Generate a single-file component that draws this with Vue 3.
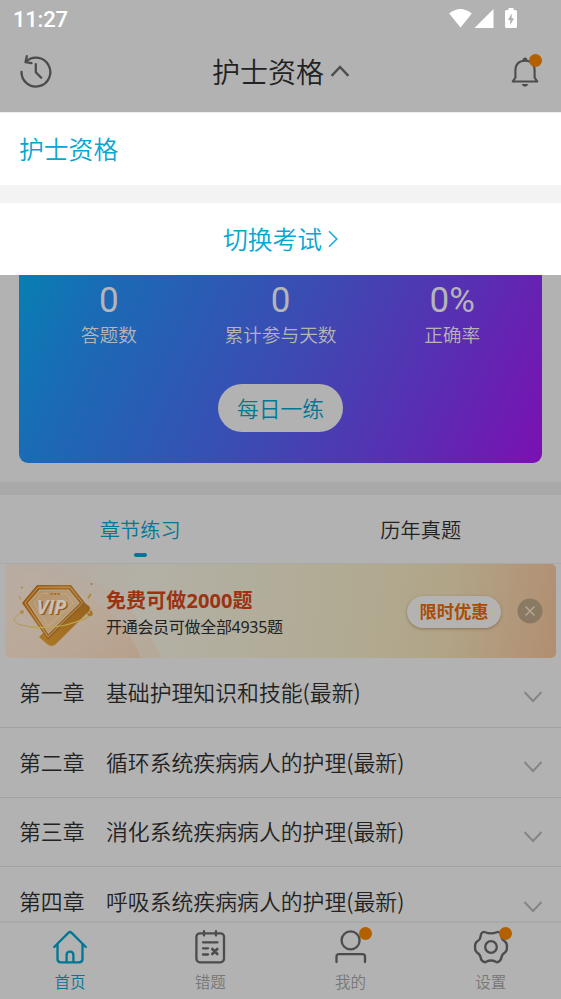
<script setup>
const stats = [
  { value: '0', label: '答题数' },
  { value: '0', label: '累计参与天数' },
  { value: '0%', label: '正确率' },
]
const chapters = [
  { no: '第一章', title: '基础护理知识和技能(最新)' },
  { no: '第二章', title: '循环系统疾病病人的护理(最新)' },
  { no: '第三章', title: '消化系统疾病病人的护理(最新)' },
  { no: '第四章', title: '呼吸系统疾病病人的护理(最新)' },
]
const navItems = [
  { id: 'home', label: '首页', active: true },
  { id: 'wrong', label: '错题' },
  { id: 'mine', label: '我的', badge: true },
  { id: 'settings', label: '设置', badge: true },
]
</script>

<template>
  <div class="screen">
    <div class="statusbar">
      <span class="clock">11:27</span>
      <svg class="status-icons" width="72" height="22" viewBox="0 0 72 22" fill="#fff">
        <path d="M1.2 5.6Q12.500 -3.400 23.800 5.600L12.500 19.400Z" />
        <path d="M45.500 1V20H26.500Z" />
        <path fill-rule="evenodd" d="M60.500 0h5v2h2q1.500 0 1.500 1.500v15q0 1.500-1.500 1.500h-9q-1.500 0-1.500-1.500v-15q0-1.500 1.500-1.500h2zM63.700 5.500l-3.900 6.600h2.400v4.900l3.900-6.800h-2.400z" />
      </svg>
    </div>

    <header class="header">
      <svg class="history" width="36" height="36" viewBox="0 0 36 36" fill="none" stroke="#4c4c4c" stroke-width="2.300" stroke-linecap="round" stroke-linejoin="round">
        <path d="M3.500 17.800A14.400 14.400 0 1 0 8.300 7.400" />
        <path d="M8.800 2.200L7.500 8.200L13.500 9.200" />
        <path d="M17.800 10.200V18.200L23.200 23.700" />
      </svg>
      <h1 class="title">
        <span>护士资格</span>
        <svg width="20" height="14" viewBox="0 0 20 14" fill="none" stroke="#4f4f4f" stroke-width="2.500"><path d="M1.600 11.800L10 3L18.400 11.800" /></svg>
      </h1>
      <div class="bell">
        <svg width="30" height="36" viewBox="0 0 30 36" fill="none" stroke="#4c4c4c" stroke-width="2.100">
          <path d="M2.700 27.500L5.400 23.700V16.500C5.400 10 9 6.700 15 6.700C21 6.700 24.600 10 24.600 16.500V23.700L27.300 27.500Z" stroke-linejoin="round" />
          <path d="M12.200 7L13 4.500Q15 2.500 17 4.500L17.800 7Z" fill="#4c4c4c" stroke="none" />
          <path d="M11.700 30h6.600q-1 2.800-3.300 2.800t-3.300-2.800z" fill="#4c4c4c" stroke="none" />
        </svg>
        <i class="dot"></i>
      </div>
    </header>

    <section class="sheet">
      <div class="current">护士资格</div>
      <div class="switch">
        <span>切换考试</span>
        <svg width="12" height="18" viewBox="0 0 12 18" fill="none" stroke="#1aabd4" stroke-width="1.600"><path d="M2 1.300L9.800 9L2 16.700" /></svg>
      </div>
    </section>

    <section class="summary">
      <div class="card">
        <div class="stats">
          <div v-for="s in stats" :key="s.label" class="stat">
            <span class="value">{{ s.value }}</span>
            <span class="label">{{ s.label }}</span>
          </div>
        </div>
        <button class="daily">每日一练</button>
      </div>
    </section>

    <nav class="tabs">
      <div class="tab on"><span>章节练习</span></div>
      <div class="tab"><span>历年真题</span></div>
    </nav>

    <section class="banner">
      <svg class="backdrop" width="160" height="94" viewBox="0 0 160 94">
        <defs>
          <linearGradient id="swoosh" x1="0" y1="0" x2="1" y2="1">
            <stop offset="0" stop-color="#c9b5a4" stop-opacity="0" />
            <stop offset="1" stop-color="#b79a83" />
          </linearGradient>
          <linearGradient id="swoosh2" x1="0" y1="0" x2="1" y2="1">
            <stop offset="0" stop-color="#b8aca3" />
            <stop offset="1" stop-color="#b7a691" />
          </linearGradient>
        </defs>
        <path d="M50 0Q122 20 157 94H0V0Z" fill="url(#swoosh2)" opacity=".6" />
        <path d="M0 0Q112 26 136 94H0Z" fill="url(#swoosh)" opacity=".7" />
      </svg>
      <svg class="gem" width="86" height="70" viewBox="0 0 86 70">
        <defs>
          <linearGradient id="gold" x1="0" y1="0" x2="1" y2=".6">
            <stop offset="0" stop-color="#98530c" />
            <stop offset=".5" stop-color="#a36a25" />
            <stop offset="1" stop-color="#8d5c20" />
          </linearGradient>
          <linearGradient id="face" x1="0" y1="0" x2="1" y2="1">
            <stop offset="0" stop-color="#b39064" />
            <stop offset=".6" stop-color="#b99d7b" />
            <stop offset="1" stop-color="#b08650" />
          </linearGradient>
          <linearGradient id="side" x1="1" y1="0" x2="0" y2="1">
            <stop offset="0" stop-color="#95601d" />
            <stop offset="1" stop-color="#ad7a27" />
          </linearGradient>
        </defs>
        <path d="M9 33Q-6 42 8 46Q36 53 73 40Q84 33 74 27" fill="none" stroke="#b09a62" stroke-width="1" />
        <path d="M66 20L76 27Q78 29 76 32L43 65Q39 69 34 65L26 58Z" fill="url(#side)" />
        <path d="M24 6H58L72.500 24.500L35 61L9 24Z" fill="url(#gold)" />
        <path d="M25.200 8.200H57L69.500 24L35 57.700L12 24Z" fill="none" stroke="#bda06a" stroke-width=".9" />
        <path d="M27 11H55.500L66 24L35.500 54L15.500 24Z" fill="url(#face)" stroke="#b9a486" stroke-width="1.200" />
        <path d="M29 14.500H35M48 14.500H54M28 15L21 24L35.500 47L60 24L54 15" fill="none" stroke="#c4b293" stroke-width=".6" />
        <path d="M37.500 15h9.500" stroke="#a8712f" stroke-width="2" stroke-dasharray="2.300 1.200" />
        <text x="25" y="36" class="vip-shadow">VIP</text>
        <text x="23.500" y="35" class="vip-text">VIP</text>
        <path d="M16 48Q54 51 77 36" fill="none" stroke="#bba651" stroke-width="1.300" />
        <circle cx="77" cy="34.500" r="2.800" fill="#aa7429" /><circle cx="76" cy="33.500" r="1.100" fill="#bf9b65" />
        <circle cx="9" cy="33" r="2" fill="#b18a50" />
        <circle cx="9" cy="8.500" r="1" fill="#a88245" /><circle cx="78.500" cy="5" r="1" fill="#9c7950" />
        <path d="M75.500 18.500L77.500 15.500" stroke="#b18b45" stroke-width="2.200" stroke-linecap="round" />
        <path d="M6 17L8 21" stroke="#b69757" stroke-width="1.400" />
      </svg>
      <div class="promo">
        <strong>免费可做2000题</strong>
        <span>开通会员可做全部4935题</span>
      </div>
      <span class="offer">限时优惠</span>
      <svg class="close" width="26" height="26" viewBox="0 0 26 26">
        <circle cx="13" cy="13" r="12.500" fill="#8a7963" />
        <path d="M8.500 8.500L17.500 17.500M17.500 8.500L8.500 17.500" stroke="#b5a894" stroke-width="1.500" />
      </svg>
    </section>

    <main class="chapters">
      <div v-for="c in chapters" :key="c.no" class="row">
        <span class="no">{{ c.no }}</span>
        <span class="name">{{ c.title }}</span>
        <svg width="20" height="14" viewBox="0 0 20 14" fill="none" stroke="#858585" stroke-width="1.900"><path d="M1.500 2L10 11L18.500 2" /></svg>
      </div>
    </main>

    <footer class="nav">
      <div v-for="n in navItems" :key="n.id" class="nav-item" :class="{ active: n.active }">
        <div class="glyph">
          <svg width="36" height="36" viewBox="0 0 36 36" fill="none" stroke="currentColor" stroke-width="2.300" stroke-linecap="round" stroke-linejoin="round">
            <template v-if="n.id === 'home'">
              <path d="M2.200 18L16.600 3.600Q18 2.300 19.400 3.600L33.800 18" />
              <path d="M5.500 15.500V30Q5.500 33.300 8.800 33.300H27.200Q30.500 33.300 30.500 30V15.500" />
              <path d="M14.600 33V26Q14.600 22.600 18 22.600T21.400 26V33" />
            </template>
            <template v-else-if="n.id === 'wrong'">
              <rect x="4.400" y="4.300" width="27.600" height="29" rx="3.500" />
              <path d="M12 2.200V6.600M24 2.200V6.600M11 13.300H25.500M11 19.300H16M11 25.500H16" />
              <path d="M20.300 20L25.300 25M25.300 20L20.300 25" stroke-width="2.600" />
            </template>
            <template v-else-if="n.id === 'mine'">
              <circle cx="17.600" cy="11.400" r="9" />
              <path d="M3.500 33V27.800Q3.500 25.200 6.100 25.200H29.400Q32 25.200 32 27.800V33" />
            </template>
            <template v-else>
              <path d="M10.400 3Q11.300 2.700 12.200 3.200Q18 5.600 23.800 3.200Q24.700 2.700 25.600 3Q28.300 4 28.300 7Q28.600 10.600 32 12.500Q34 14 34 18Q34 22 32 23.500Q28.600 25.400 28.300 29Q27.800 32 24.500 33.200Q23.600 33.400 22.900 32.800Q18 30.200 13.100 32.800Q12.400 33.400 11.500 33.200Q8.200 32 7.700 29Q7.400 25.400 4 23.500Q2 22 2 18Q2 14 4 12.500Q7.400 10.600 7.700 7Q7.700 4 10.400 3Z" />
              <circle cx="18" cy="18" r="5.800" />
            </template>
          </svg>
          <i v-if="n.badge" class="dot"></i>
        </div>
        <span>{{ n.label }}</span>
      </div>
    </footer>
  </div>
</template>

<style>
body { margin: 0; background: #b2b2b2; }
</style>

<style scoped>
.screen {
  width: 561px;
  height: 999px;
  overflow: hidden;
  display: flex;
  flex-direction: column;
  background: #b2b2b2;
  color: #222;
  font-family: "Noto Sans CJK SC", sans-serif;
  font-weight: 350;
}
.screen * { box-sizing: border-box; }
.screen svg { display: block; flex: none; }
.statusbar {
  height: 38px;
  flex: none;
  display: flex;
  align-items: center;
  justify-content: space-between;
  padding: 0 41px 0 13px;
  color: #fff;
}
.clock { font: 500 22px/38px Roboto, sans-serif; letter-spacing: -.2px; padding-top: 1px; }
.status-icons { margin-bottom: 1px; }
.header {
  height: 74px;
  flex: none;
  display: grid;
  grid-template-columns: 1fr auto 1fr;
  align-items: center;
  padding: 0 20px 6px 18px;
}
.title {
  margin: 0 0 3px 3px;
  display: flex;
  align-items: center;
  gap: 6px;
  font-size: 28px;
  line-height: 40px;
  font-weight: 350;
}
.title svg { margin-top: 0; }
.bell { position: relative; justify-self: end; margin-right: 1px; }
.dot {
  position: absolute;
  width: 13px;
  height: 13px;
  border-radius: 50%;
  background: #b36000;
}
.bell .dot { right: -2px; top: 0; }
.sheet {
  flex: none;
  height: 163px;
  display: flex;
  flex-direction: column;
  background: #fff;
  color: #05a6d1;
  font-size: 24.800px;
  border-top: 1px solid #ededed;
}
.current { height: 72px; padding-left: 19px; line-height: 70px; }
.switch {
  height: 90px;
  display: flex;
  align-items: center;
  justify-content: center;
  gap: 5px;
  padding: 0 0 1px 1px;
  border-top: 18px solid #f3f3f3;
}
.switch span { margin-bottom: 2px; }
.summary { flex: none; height: 220px; padding: 0 19px; border-bottom: 13px solid #a9a9a9; }
.card {
  height: 188px;
  border-radius: 0 0 9px 9px;
  background: linear-gradient(115deg, #087fb3 0%, #1b6ab5 16%, #3c4bb3 50%, #5a2db2 77%, #7b10b2 100%);
  color: #b5b5b8;
  display: flex;
  flex-direction: column;
  align-items: center;
}
.stats { width: 100%; height: 109px; display: flex; padding: 5px 4px 0; }
.stat { flex: 1; display: flex; flex-direction: column; align-items: center; }
.value { font-family: Roboto, sans-serif; font-size: 35px; line-height: 41px; font-weight: 400; }
.label { font-size: 18.700px; line-height: 25px; }
.daily {
  width: 125px;
  height: 48px;
  border: 0;
  border-radius: 24px;
  padding: 0;
  background: #b2b2b2;
  color: #007795;
  font: 350 21.800px/48px "Noto Sans CJK SC", sans-serif;
}
.tabs { flex: none; height: 69px; display: flex; border-bottom: 1px solid #a9a9a9; }
.tab {
  flex: 1;
  display: flex;
  flex-direction: column;
  align-items: center;
  font-size: 20.200px;
  line-height: 30px;
  padding-top: 20px;
}
.tab.on { color: #007795; }
.tab.on::after {
  content: "";
  width: 13px;
  height: 4px;
  margin-top: 8px;
  border-radius: 2px;
  background: #007795;
}
.banner {
  position: relative;
  flex: none;
  height: 94px;
  margin: 0 5px;
  border-radius: 5px;
  overflow: hidden;
  display: flex;
  align-items: center;
  background: linear-gradient(98deg, #b7aaa0 0%, #b3b0a6 25%, #b2ae9d 42%, #b1aa91 65%, #b1a487 80%, #b29578 94%, #b18e70 100%);
}
.backdrop { position: absolute; left: 0; top: 0; }
.gem { position: relative; margin: 5px 0 0 8px; }
.vip-text, .vip-shadow { font: italic 700 20px "Open Sans", sans-serif; letter-spacing: -.3px; }
.vip-text { fill: #c9c1b5; }
.vip-shadow { fill: #965c1c; }
.promo { position: relative; width: 215px; margin: 5px 0 0 7px; display: flex; flex-direction: column; color: #222; font-family: "Noto Sans", "Noto Sans CJK SC", sans-serif; }
.promo strong { font-size: 20px; line-height: 28px; font-weight: 700; color: #9b3313; letter-spacing: .1px; }
.promo span { font-size: 16px; line-height: 25px; letter-spacing: -.3px; font-weight: 400; }
.offer {
  width: 94px;
  height: 32px;
  margin: 1px 0 0 86px;
  border-radius: 16px;
  background: #b4b3b1;
  box-shadow: 0 1px 3px rgba(100, 72, 38, .5);
  color: #aa4d04;
  font-size: 17.300px;
  font-weight: 700;
  line-height: 30px;
  text-align: center;
}
.close { margin-left: 16px; }
.chapters { flex: none; height: 263px; overflow: hidden; }
.row {
  height: 69.800px;
  display: flex;
  align-items: center;
  padding: 0 18px 2px 19px;
  border-bottom: 1px solid #a1a1a1;
  font-size: 21.850px;
}
.no { width: 87px; }
.name { flex: 1; }
.row svg { margin-top: 12px; }
.nav {
  flex: none;
  height: 78px;
  display: flex;
  border-top: 2px solid #a9a9a9;
  color: #4c4c4c;
}
.nav-item {
  flex: 1;
  display: flex;
  flex-direction: column;
  align-items: center;
  padding-top: 6px;
  font-size: 15.500px;
  line-height: 24px;
}
.nav-item > span { color: #777; margin-top: 4px; }
.glyph { position: relative; height: 36px; }
.glyph .dot { right: -3px; top: -2px; }
.nav-item.active, .nav-item.active > span { color: #007795; }
</style>
